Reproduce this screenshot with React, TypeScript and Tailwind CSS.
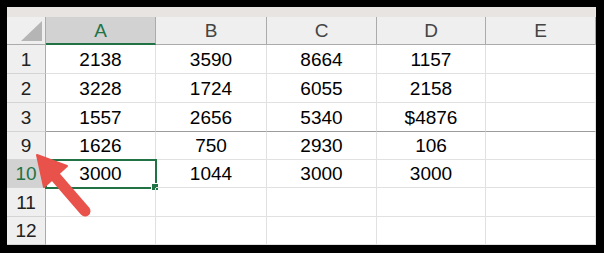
import React from 'react';

const cols = ['A', 'B', 'C', 'D', 'E'];

// Visible rows: 4-8 are hidden, so row 3 gets the darker divider.
const rows: { n: number; vals: string[]; h: string }[] = [
  { n: 1, vals: ['2138', '3590', '8664', '1157', ''], h: 'h-[29px]' },
  { n: 2, vals: ['3228', '1724', '6055', '2158', ''], h: 'h-[29px]' },
  { n: 3, vals: ['1557', '2656', '5340', '$4876', ''], h: 'h-[29px]' },
  { n: 9, vals: ['1626', '750', '2930', '106', ''], h: 'h-[28px]' },
  { n: 10, vals: ['3000', '1044', '3000', '3000', ''], h: 'h-[28px]' },
  { n: 11, vals: ['', '', '', '', ''], h: 'h-[29px]' },
  { n: 12, vals: ['', '', '', '', ''], h: 'h-[28px]' },
];

export default function App() {
  return (
    <div
      className="relative w-[604px] h-[253px] bg-black pt-[7px] pl-[7px] pr-[8px] pb-[8px] overflow-hidden"
      style={{ fontFamily: '"Liberation Sans", Arial, sans-serif' }}
    >
      <div className="w-[589px] h-[238px] bg-white">
        <div className="h-[10px] bg-[#e8e4e2]" />
        <div className="grid grid-cols-[39px_110px_111px_110px_109px_110px] text-[19px] leading-none">
          {/* header row */}
          <div className="h-[28px] bg-[#efefef] border-r border-b border-[#ababab] flex items-end justify-end pr-[3px] pb-[3px]">
            <svg width="21" height="20" viewBox="0 0 21 20">
              <polygon points="21,0 21,20 0,20" fill="#b5b5b5" />
            </svg>
          </div>
          {cols.map((c) => (
            <div
              key={c}
              className={
                c === 'A'
                  ? 'h-[28px] bg-[#d2d2d2] border-r border-[#ababab] border-b-2 border-b-[#217346] flex items-center justify-center text-[#217346]'
                  : 'h-[28px] bg-[#efefef] border-r border-b border-[#ababab] flex items-center justify-center text-[#444]'
              }
            >
              {c}
            </div>
          ))}

          {rows.map((r) => {
            const dark = r.n === 3;
            const sel = r.n === 10;
            return (
              <React.Fragment key={r.n}>
                <div
                  className={`${r.h} border-r border-b border-r-[#ababab] border-b-[#d4d4d4] flex items-center justify-center ${
                    sel ? 'bg-[#d2d2d2] text-[#217346]' : 'bg-[#efefef] text-[#222]'
                  }`}
                >
                  {r.n}
                </div>
                {r.vals.map((v, i) => (
                  <div
                    key={i}
                    className={`${r.h} relative border-r border-b border-r-[#e1e1e1] ${
                      dark ? 'border-b-[#9c9c9c]' : 'border-b-[#e1e1e1]'
                    } flex items-center justify-center text-black`}
                  >
                    {v}
                    {sel && i === 0 && (
                      <div className="absolute -left-[1px] -top-[1px] w-[112px] h-[30px] border-2 border-[#217346]">
                        <div className="absolute -right-[4px] -bottom-[4px] w-[6px] h-[6px] bg-[#217346] border border-white box-content" />
                      </div>
                    )}
                  </div>
                ))}
              </React.Fragment>
            );
          })}
        </div>
      </div>

      {/* red arrow pointing at the hidden-rows boundary */}
      <svg className="absolute inset-0" width="604" height="253" viewBox="0 0 604 253">
        <g fill="#e8524a" stroke="#e8524a" strokeLinejoin="round">
          <line x1="85" y1="211" x2="53" y2="174" strokeWidth="11" strokeLinecap="round" />
          <polygon points="37,155 67,166 44,187" strokeWidth="2" />
        </g>
      </svg>
    </div>
  );
}
